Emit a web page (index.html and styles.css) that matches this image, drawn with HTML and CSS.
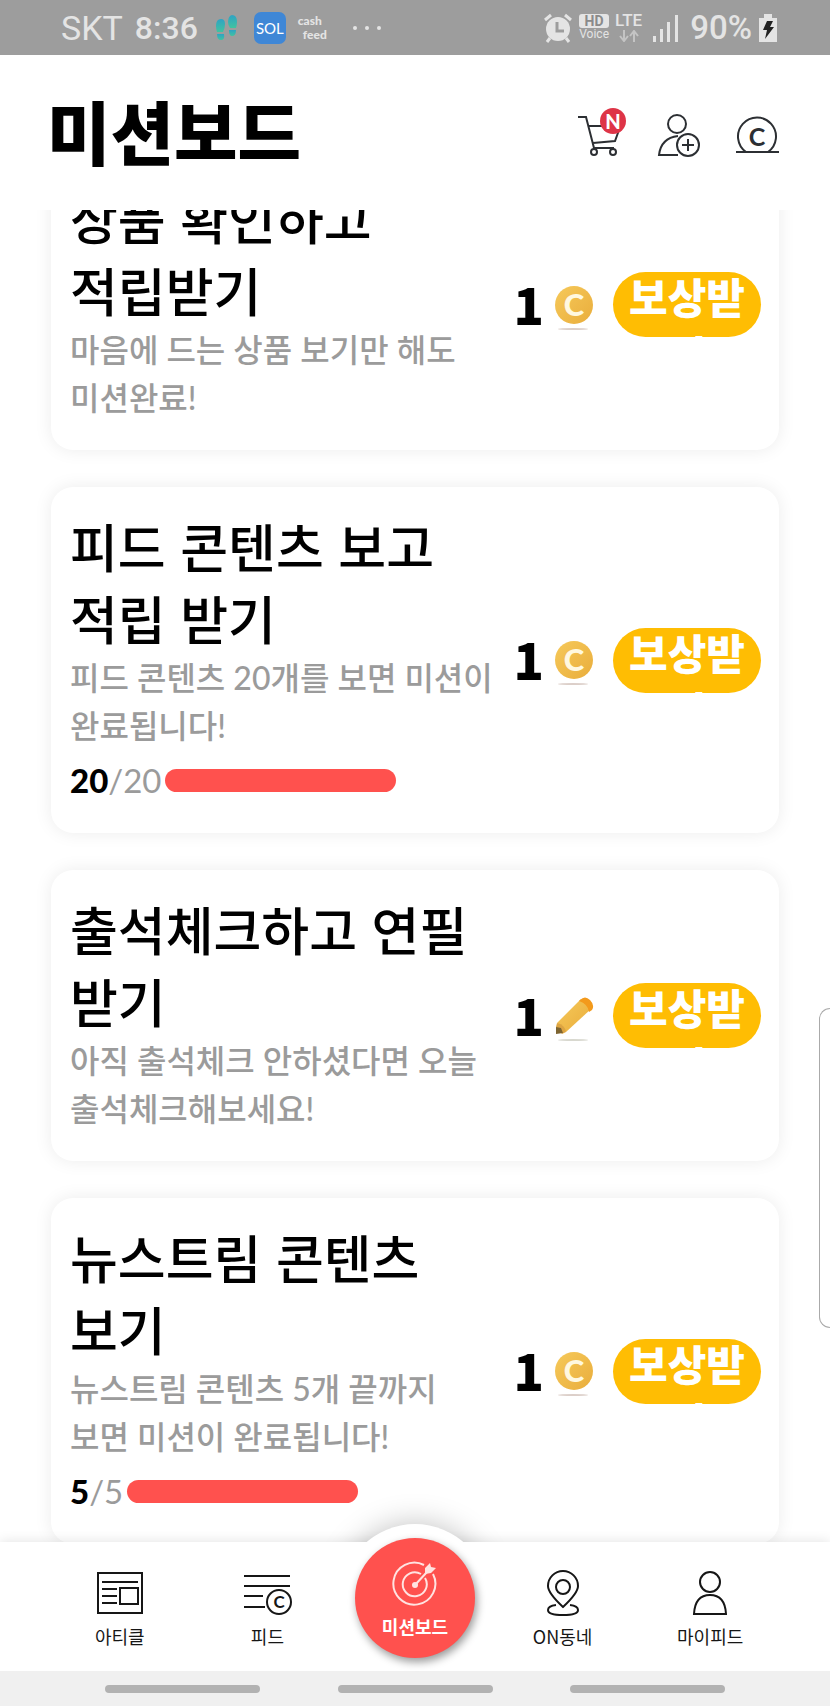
FILE: index.html
```html
<!doctype html>
<html lang="ko">
<head>
  <meta charset="UTF-8">
  <meta name="viewport" content="width=device-width, initial-scale=1">
  <title>미션보드</title>
  <link rel="stylesheet" href="styles.css">
</head>
<body>
  <svg class="defs" width="0" height="0" aria-hidden="true">
    <defs>
      <linearGradient id="gold" x1="0" y1="0" x2="1" y2="1">
        <stop offset="0" stop-color="#f6c95a"/>
        <stop offset="1" stop-color="#e9ad3c"/>
      </linearGradient>
      <symbol id="coin" viewBox="0 0 40 46">
        <circle cx="20" cy="20" r="19" fill="url(#gold)"/>
        <text class="coin-c" x="20" y="31" text-anchor="middle">C</text>
        <ellipse cx="19" cy="44" rx="15" ry="1" fill="#dccfc9"/>
      </symbol>
      <symbol id="pencil" viewBox="0 0 40 46">
        <path d="M3 27 27 3l10 10L12 36z" fill="url(#gold)"/>
        <path d="M26 4q5-5 10 0t2 10l-3 2q-1-8-10-11z" fill="#f39a1c"/>
        <path d="M2 31l1-4q8 2 9 9l-4 2z" fill="#dda441"/>
        <path d="M2 31l5 1 2 5-7 1z" fill="#7d6431"/>
        <ellipse cx="19" cy="44" rx="15" ry="1" fill="#d8d8cf"/>
      </symbol>
    </defs>
  </svg>

  <!-- 상태바 -->
  <div class="status">
    <div class="status-side">
      <span class="carrier">SKT</span>
      <span class="clock">8:36</span>
      <svg class="steps" width="24" height="26" viewBox="0 0 24 26">
        <defs>
          <linearGradient id="foot" x1="0" y1="0" x2="0" y2="1">
            <stop offset="0" stop-color="#2fa3c4"/>
            <stop offset="1" stop-color="#41c3a0"/>
          </linearGradient>
        </defs>
        <g fill="url(#foot)">
          <path d="M1 11q0-7 5-7 4 0 4 5 0 4-2 8H2q-1-3-1-6z"/>
          <path d="M2 19h7q1 6-3 6-4 0-4-6z"/>
          <path d="M13 7q0-6 4-7 5 0 5 7 0 3-1 6h-6q-2-3-2-6z"/>
          <path d="M14 15h7q0 6-4 6-3 0-3-6z"/>
        </g>
      </svg>
      <span class="sol">SOL</span>
      <span class="cash"><span>cash</span><span>feed</span></span>
      <span class="dots"><i></i><i></i><i></i></span>
    </div>
    <div class="status-side status-right">
      <svg width="30" height="30" viewBox="0 0 30 30">
        <circle cx="15" cy="16" r="12" fill="#e4e4e4"/>
        <path d="M2 7l6-5M28 7l-6-5" stroke="#e4e4e4" stroke-width="3"/>
        <path d="M7 25l-3 4M23 25l3 4" stroke="#e4e4e4" stroke-width="3"/>
        <path d="M14 9v9h7" fill="none" stroke="#9d9d9d" stroke-width="3"/>
      </svg>
      <span class="hd"><b>HD</b><span>Voice</span></span>
      <span class="lte">LTE
        <svg width="20" height="12" viewBox="0 0 20 12" fill="none" stroke="#c4c4c4" stroke-width="2">
          <path d="M5 0v11M1 6l4 5 4-5M15 12V1M11 6l4-5 4 5"/>
        </svg>
      </span>
      <svg class="signal" width="26" height="28" viewBox="0 0 26 28" fill="#e4e4e4">
        <path d="M0 22h3v6H0zM7 15h3v13H7zM14 8h3v20h-3zM22 1h3v27h-3z"/>
      </svg>
      <span class="battery-text">90%</span>
      <svg width="20" height="30" viewBox="0 0 20 30">
        <path d="M1 5h5V1h8v4h5v24H1z" fill="#e4e4e4"/>
        <path d="M9 8h6l-3 6h4L7 26l2-9H5z" fill="#222"/>
      </svg>
    </div>
  </div>

  <header class="header">
    <h1>미션보드</h1>
    <div class="tools">
      <button type="button" class="tool" aria-label="장바구니">
        <svg width="50" height="50" viewBox="0 0 50 50" fill="none" stroke="#2c2f33" stroke-width="2">
          <path d="M2 9h8l8 31h20M12 18h25M17 35l22-2 4-11"/>
          <circle cx="18" cy="44" r="3"/>
          <circle cx="37" cy="44" r="3"/>
        </svg>
        <span class="badge">N</span>
      </button>
      <button type="button" class="tool" aria-label="친구 초대">
        <svg width="50" height="50" viewBox="0 0 50 50" fill="none" stroke="#2c2f33" stroke-width="2">
          <circle cx="23" cy="16" r="9"/>
          <path d="M24 28Q7 30 5 47h19"/>
          <circle cx="34" cy="37" r="11"/>
          <path d="M34 31v12M28 37h12"/>
        </svg>
      </button>
      <button type="button" class="tool" aria-label="캐시">
        <svg width="50" height="50" viewBox="0 0 50 50" fill="none" stroke="#2c2f33" stroke-width="2">
          <path d="M14 44a19 19 0 1 1 22 0M4 44h43"/>
          <text class="cash-c" x="25" y="38" text-anchor="middle">C</text>
        </svg>
      </button>
    </div>
  </header>

  <main class="board">
    <ul class="missions">
      <li class="card">
        <div class="info">
          <h2>상품 확인하고 적립받기</h2>
          <p>마음에 드는 상품 보기만 해도 미션완료!</p>
        </div>
        <div class="reward">
          <strong>1</strong>
          <svg width="40" height="46"><use href="#coin"/></svg>
          <button type="button" class="get"><span>보상받기</span></button>
        </div>
      </li>
      <li class="card">
        <div class="info">
          <h2>피드 콘텐츠 보고 적립 받기</h2>
          <p>피드 콘텐츠 20개를 보면 미션이 완료됩니다!</p>
          <div class="progress"><span><b>20</b>/20</span><i class="bar"></i></div>
        </div>
        <div class="reward">
          <strong>1</strong>
          <svg width="40" height="46"><use href="#coin"/></svg>
          <button type="button" class="get"><span>보상받기</span></button>
        </div>
      </li>
      <li class="card">
        <div class="info">
          <h2>출석체크하고 연필 받기</h2>
          <p>아직 출석체크 안하셨다면 오늘 출석체크해보세요!</p>
        </div>
        <div class="reward">
          <strong>1</strong>
          <svg width="40" height="46"><use href="#pencil"/></svg>
          <button type="button" class="get"><span>보상받기</span></button>
        </div>
      </li>
      <li class="card">
        <div class="info">
          <h2>뉴스트림 콘텐츠 보기</h2>
          <p>뉴스트림 콘텐츠 5개 끝까지 보면 미션이 완료됩니다!</p>
          <div class="progress"><span><b>5</b>/5</span><i class="bar"></i></div>
        </div>
        <div class="reward">
          <strong>1</strong>
          <svg width="40" height="46"><use href="#coin"/></svg>
          <button type="button" class="get"><span>보상받기</span></button>
        </div>
      </li>
    </ul>
  </main>

  <div class="edge"></div>

  <nav class="tabs">
    <a href="#article">
      <svg width="50" height="50" viewBox="0 0 50 50" fill="none" stroke="#161616" stroke-width="2">
        <path d="M3 5h44v40H3zM7 14h36M7 21h15M7 28h15M7 35h15M25 20h18v16H25z"/>
      </svg>
      <span>아티클</span>
    </a>
    <a href="#feed">
      <svg width="50" height="50" viewBox="0 0 50 50" fill="none" stroke="#161616" stroke-width="2">
        <path d="M2 8h46M2 18h46M2 28h19M2 39h21"/>
        <circle cx="37" cy="34" r="12"/>
        <text class="feed-c" x="37" y="40" text-anchor="middle">C</text>
      </svg>
      <span>피드</span>
    </a>
    <a href="#mission" class="on">
      <span class="disc">
        <svg width="50" height="50" viewBox="0 0 50 50" fill="none" stroke="#ffe3e1" stroke-width="2">
          <path d="M34 6A21 21 0 1 0 43 15M31 15a12 12 0 1 0 4 4"/>
          <circle cx="25" cy="26" r="3" fill="#ffe3e1" stroke="none"/>
          <path d="M25 26 37 13"/>
          <path d="M35 9l5-5 1 4 5 1-5 5-6 1z" fill="#ffe3e1" stroke="none"/>
        </svg>
        <span>미션보드</span>
      </span>
    </a>
    <a href="#town">
      <svg width="50" height="50" viewBox="0 0 50 50" fill="none" stroke="#161616" stroke-width="2">
        <path d="M25 39Q10 25 10 18a15 15 0 0 1 30 0q0 7-15 21z"/>
        <circle cx="25" cy="19" r="7"/>
        <path d="M18 37q-8 1-8 5 0 5 15 5t15-5q0-4-8-5"/>
      </svg>
      <span>ON동네</span>
    </a>
    <a href="#my">
      <svg width="50" height="50" viewBox="0 0 50 50" fill="none" stroke="#161616" stroke-width="2">
        <circle cx="25" cy="14" r="10"/>
        <path d="M9 46q1-19 16-19t16 19z"/>
      </svg>
      <span>마이피드</span>
    </a>
  </nav>

  <div class="system"><i></i><i></i><i></i></div>
</body>
</html>
```
FILE: styles.css
```css
*{box-sizing:border-box;}
body{
  margin:0;
  height:100vh;
  display:flex;
  flex-direction:column;
  overflow:hidden;
  background:#fff;
  color:#000;
  font-family:"Noto Sans CJK KR",sans-serif;
}
h1,h2,p,ul{margin:0;padding:0;}
ul{list-style:none;}
a{color:inherit;text-decoration:none;}
button{border:0;padding:0;background:none;font-family:inherit;}
svg{display:block;flex:none;}
.defs{position:absolute;}

/* 상태바 */
.status{
  flex:none;
  height:55px;
  padding:0 52px 0 61px;
  display:flex;
  align-items:center;
  justify-content:space-between;
  background:#9d9d9d;
  color:#e4e4e4;
  font-family:Roboto,sans-serif;
}
.status-side{display:flex;align-items:center;}
.carrier{font-size:34px;}
.clock{margin-left:12px;font-size:32px;font-weight:500;}
.steps{margin-left:17px;}
.sol{
  width:32px;
  height:32px;
  margin-left:15px;
  border-radius:7px;
  background:#3f87d6;
  color:#fff;
  font:15px/32px Lato,sans-serif;
  text-align:center;
}
.cash{
  margin-left:12px;
  display:flex;
  flex-direction:column;
  font:900 12px/14px Lato,sans-serif;
}
.cash span + span{padding-left:5px;}
.dots{display:flex;gap:8px;margin-left:26px;}
.dots i{width:4px;height:4px;border-radius:2px;background:#e4e4e4;}
.status-right{gap:6px;}
.hd{display:flex;flex-direction:column;align-items:center;font-size:12px;line-height:13px;}
.hd b{
  width:30px;
  border-radius:3px;
  background:#e4e4e4;
  color:#8a8a8a;
  font-size:14px;
  line-height:14px;
  text-align:center;
}
.lte{display:flex;flex-direction:column;align-items:center;gap:2px;font-size:17px;line-height:15px;font-weight:500;}
.signal{margin:0 5px;}
.battery-text{font-size:33px;font-weight:500;}

/* 헤더 */
.header{
  flex:none;
  position:relative;
  z-index:1;
  height:155px;
  padding:0 48px 0 47px;
  display:flex;
  align-items:center;
  justify-content:space-between;
  background:#fff;
}
h1{padding-bottom:5px;font-size:69px;font-weight:900;line-height:100px;}
.tools{display:flex;gap:28px;}
.tool{position:relative;}
.badge{
  position:absolute;
  top:0;
  right:0;
  width:26px;
  height:26px;
  border-radius:13px;
  background:#de3447;
  color:#fff;
  font:900 20px/26px Lato,sans-serif;
  text-align:center;
}
.cash-c{fill:#2c2f33;stroke:none;font:bold 25px Lato,sans-serif;}

/* 미션 목록 */
.board{flex:1;min-height:0;}
.missions{
  margin-top:-51px;
  padding:0 51px;
  display:flex;
  flex-direction:column;
  gap:37px;
}
.card{
  padding:23px 18px 28px 19px;
  display:flex;
  align-items:center;
  gap:12px;
  border-radius:22px;
  background:#fff;
  box-shadow:0 0 18px rgba(0,0,0,0.08);
}
.info{flex:1;word-break:keep-all;}
h2{font-size:52px;font-weight:500;line-height:72px;}
.info p{
  color:#9b9b9b;
  font:500 32px/48px Lato,"Noto Sans CJK KR",sans-serif;
}
.progress{
  height:55px;
  padding-top:6px;
  display:flex;
  align-items:center;
  gap:4px;
  color:#9b9b9b;
  font:33px/49px Lato,sans-serif;
}
.progress b{color:#000;font-weight:900;}
.bar{width:231px;height:23px;border-radius:12px;background:#ff514e;}
.card .reward{margin-top:5px;}
.reward{display:flex;align-items:center;}
.reward strong{padding-bottom:4px;font-size:50px;font-weight:900;line-height:62px;}
.reward svg{margin:6px 19px 0 10px;}
.get{
  width:148px;
  height:65px;
  overflow:hidden;
  border-radius:33px;
  background:#ffbd03;
  color:#fff;
  font-size:42px;
  font-weight:900;
  line-height:58px;
}
.get span{display:block;height:65px;margin-top:-10px;word-break:break-all;}
.coin-c{fill:#fff8e0;font:900 31px Lato,sans-serif;}

/* 엣지 패널 손잡이 */
.edge{
  position:absolute;
  top:1008px;
  right:0;
  width:11px;
  height:320px;
  border:1px solid #aaa;
  border-right:0;
  border-radius:12px 0 0 12px;
  background:#fff;
}

/* 하단 탭 */
.tabs{
  flex:none;
  position:relative;
  height:129px;
  padding:0 46px;
  display:flex;
  background:#fff;
  box-shadow:0 0 12px rgba(0,0,0,0.12);
}
.tabs a{
  flex:1;
  padding-top:26px;
  display:flex;
  flex-direction:column;
  align-items:center;
  gap:5px;
  color:#161616;
  font-size:18px;
  line-height:26px;
}
.tabs .on{
  position:relative;
  padding:0;
  color:#fff;
  font-weight:700;
}
.tabs .on::before{
  content:"";
  position:absolute;
  top:-18px;
  left:50%;
  width:148px;
  height:148px;
  margin-left:-74px;
  border-radius:50%;
  background:#fff;
  box-shadow:0 0 30px rgba(0,0,0,0.25);
  clip-path:inset(-50px -50px 130px -50px);
}
.tabs .on::after{
  content:"";
  position:absolute;
  top:0;
  left:50%;
  width:148px;
  height:129px;
  margin-left:-74px;
  background:#fff;
}
.disc{
  position:absolute;
  z-index:1;
  top:-4px;
  width:120px;
  height:120px;
  padding-top:21px;
  display:flex;
  flex-direction:column;
  align-items:center;
  gap:4px;
  border-radius:50%;
  background:#ff514e;
  box-shadow:2px 4px 8px rgba(0,0,0,0.4);
}
.feed-c{fill:#161616;stroke:none;font:bold 17px Lato,sans-serif;}

/* 시스템 내비게이션 */
.system{
  flex:none;
  position:relative;
  height:35px;
  padding:0 105px;
  display:flex;
  align-items:center;
  justify-content:space-between;
  background:#f0f0f0;
}
.system i{width:155px;height:8px;border-radius:4px;background:#b2b2b2;}
```
